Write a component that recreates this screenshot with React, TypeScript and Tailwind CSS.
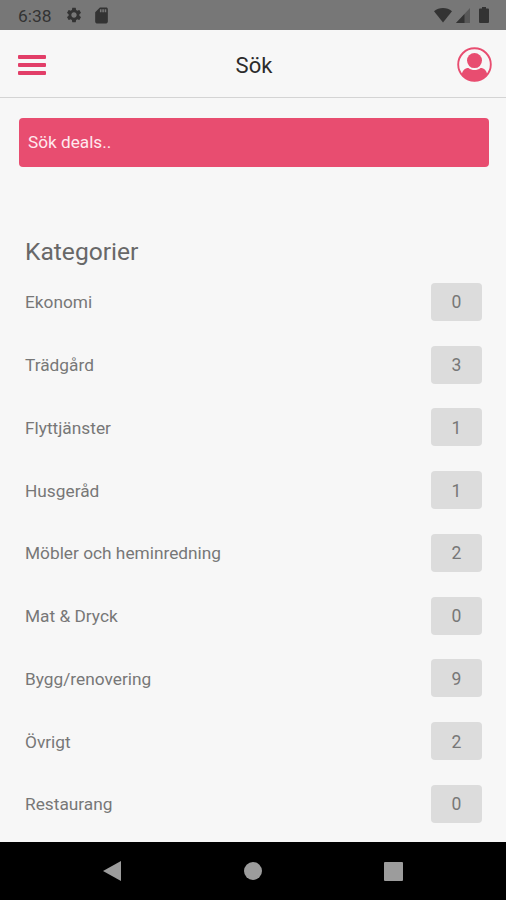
import React from 'react';
import { MdSettings, MdSdCard } from 'react-icons/md';

interface Category {
  name: string;
  count: number;
}

const categories: Category[] = [
  { name: 'Ekonomi', count: 0 },
  { name: 'Trädgård', count: 3 },
  { name: 'Flyttjänster', count: 1 },
  { name: 'Husgeråd', count: 1 },
  { name: 'Möbler och heminredning', count: 2 },
  { name: 'Mat & Dryck', count: 0 },
  { name: 'Bygg/renovering', count: 9 },
  { name: 'Övrigt', count: 2 },
  { name: 'Restaurang', count: 0 }
];

const StatusBar: React.FC = () => (
  <div className="flex h-[30px] shrink-0 items-center justify-between bg-[#777777] pl-[18px] pr-[17px] text-[#333333]">
    <div className="flex items-center">
      <span className="w-[47px] pt-0.5 text-[17.4px] leading-5">6:38</span>
      <MdSettings size={18} />
      <MdSdCard size={19} className="ml-[9px]" />
    </div>
    <div className="flex items-center">
      <svg width="18" height="15" viewBox="0 0 18 15" fill="currentColor">
        <path d="M0 3.3C2.6 1 5.7 0 9 0s6.400 1 9 3.300L9 14.500z" />
      </svg>
      <svg width="14" height="15" viewBox="0 0 14 15" fill="currentColor" className="ml-1">
        <path d="M14 0v15H0z" opacity="0.45" />
        <path d="M8.500 5.900V15H0z" />
      </svg>
      <svg width="10" height="16" viewBox="0 0 10 16" fill="currentColor" className="ml-[9px]">
        <path d="M3 0h4v1.500h2a1 1 0 0 1 1 1V15a1 1 0 0 1-1 1H1a1 1 0 0 1-1-1V2.500a1 1 0 0 1 1-1h2z" />
      </svg>
    </div>
  </div>
);

const Header: React.FC = () => (
  <header className="grid h-[68px] shrink-0 grid-cols-3 items-center border-b border-[#d4d4d4] pl-[18px] pr-[14px]">
    <button className="flex w-7 flex-col gap-1 pt-0.5">
      <span className="h-1 rounded-[1px] bg-[#e23e68]" />
      <span className="h-1 rounded-[1px] bg-[#e23e68]" />
      <span className="h-1 rounded-[1px] bg-[#e23e68]" />
    </button>
    <h1 className="pt-[5px] pr-0.5 text-center text-[22px] leading-7 text-[#2b2b2b]">Sök</h1>
    <button className="justify-self-end pt-0.5">
      <svg width="35" height="35" viewBox="0 0 35 35">
        <circle cx="17.500" cy="17.500" r="16.300" fill="none" stroke="#e84d70" strokeWidth="1.900" />
        <circle cx="17.500" cy="13.600" r="7.500" fill="#e84d70" />
        <path d="M4.800 27.500c.7-4.200 3-6.600 6.700-6.600 3.600 2.700 8.400 2.700 12 0 3.700 0 6 2.400 6.700 6.600C27 32 22.500 34.200 17.500 34.200S8 32 4.800 27.500z" fill="#e84d70" />
      </svg>
    </button>
  </header>
);

const CategoryRow: React.FC<{ category: Category }> = ({ category }) => (
  <li className="flex h-[62.75px] items-center justify-between">
    <span className="pt-[3px] text-[17.3px]">{category.name}</span>
    <span className="flex h-[38px] w-[51px] items-center justify-center rounded bg-[#dcdcdc] pt-px text-[17.5px]">
      {category.count}
    </span>
  </li>
);

const NavigationBar: React.FC = () => (
  <nav className="flex h-[58px] shrink-0 items-center justify-between bg-black pl-[103px] pr-[103px] text-[#9c9c9c]">
    <svg width="18" height="20" viewBox="0 0 18 20" fill="currentColor">
      <path d="M18 0v20L0 10z" />
    </svg>
    <span className="h-[18px] w-[18px] rounded-full bg-[#9c9c9c]" />
    <span className="h-[19px] w-[19px] rounded-[1px] bg-[#9c9c9c]" />
  </nav>
);

const App: React.FC = () => {
  return (
    <div className="flex h-[900px] w-[506px] flex-col overflow-hidden bg-[#f7f7f7] font-['Roboto',sans-serif] text-[#777777]">
      <StatusBar />
      <Header />
      <main className="min-h-0 flex-1 px-[19px] pt-5">
        <input
          type="text"
          placeholder="Sök deals.."
          className="block h-[49px] w-[470px] rounded bg-[#e84d70] px-[9px] pb-0.5 text-[17.2px] text-white outline-none placeholder:text-[#ffe9ee]"
        />
        <section className="pr-[5px] pl-1.5 pt-[67px]">
          <h2 className="pb-[0.5px] text-[24.6px] leading-9 text-[#686868]">Kategorier</h2>
          <ul>
            {categories.map((category) => (
              <CategoryRow key={category.name} category={category} />
            ))}
          </ul>
        </section>
      </main>
      <NavigationBar />
    </div>
  );
};

export default App;
